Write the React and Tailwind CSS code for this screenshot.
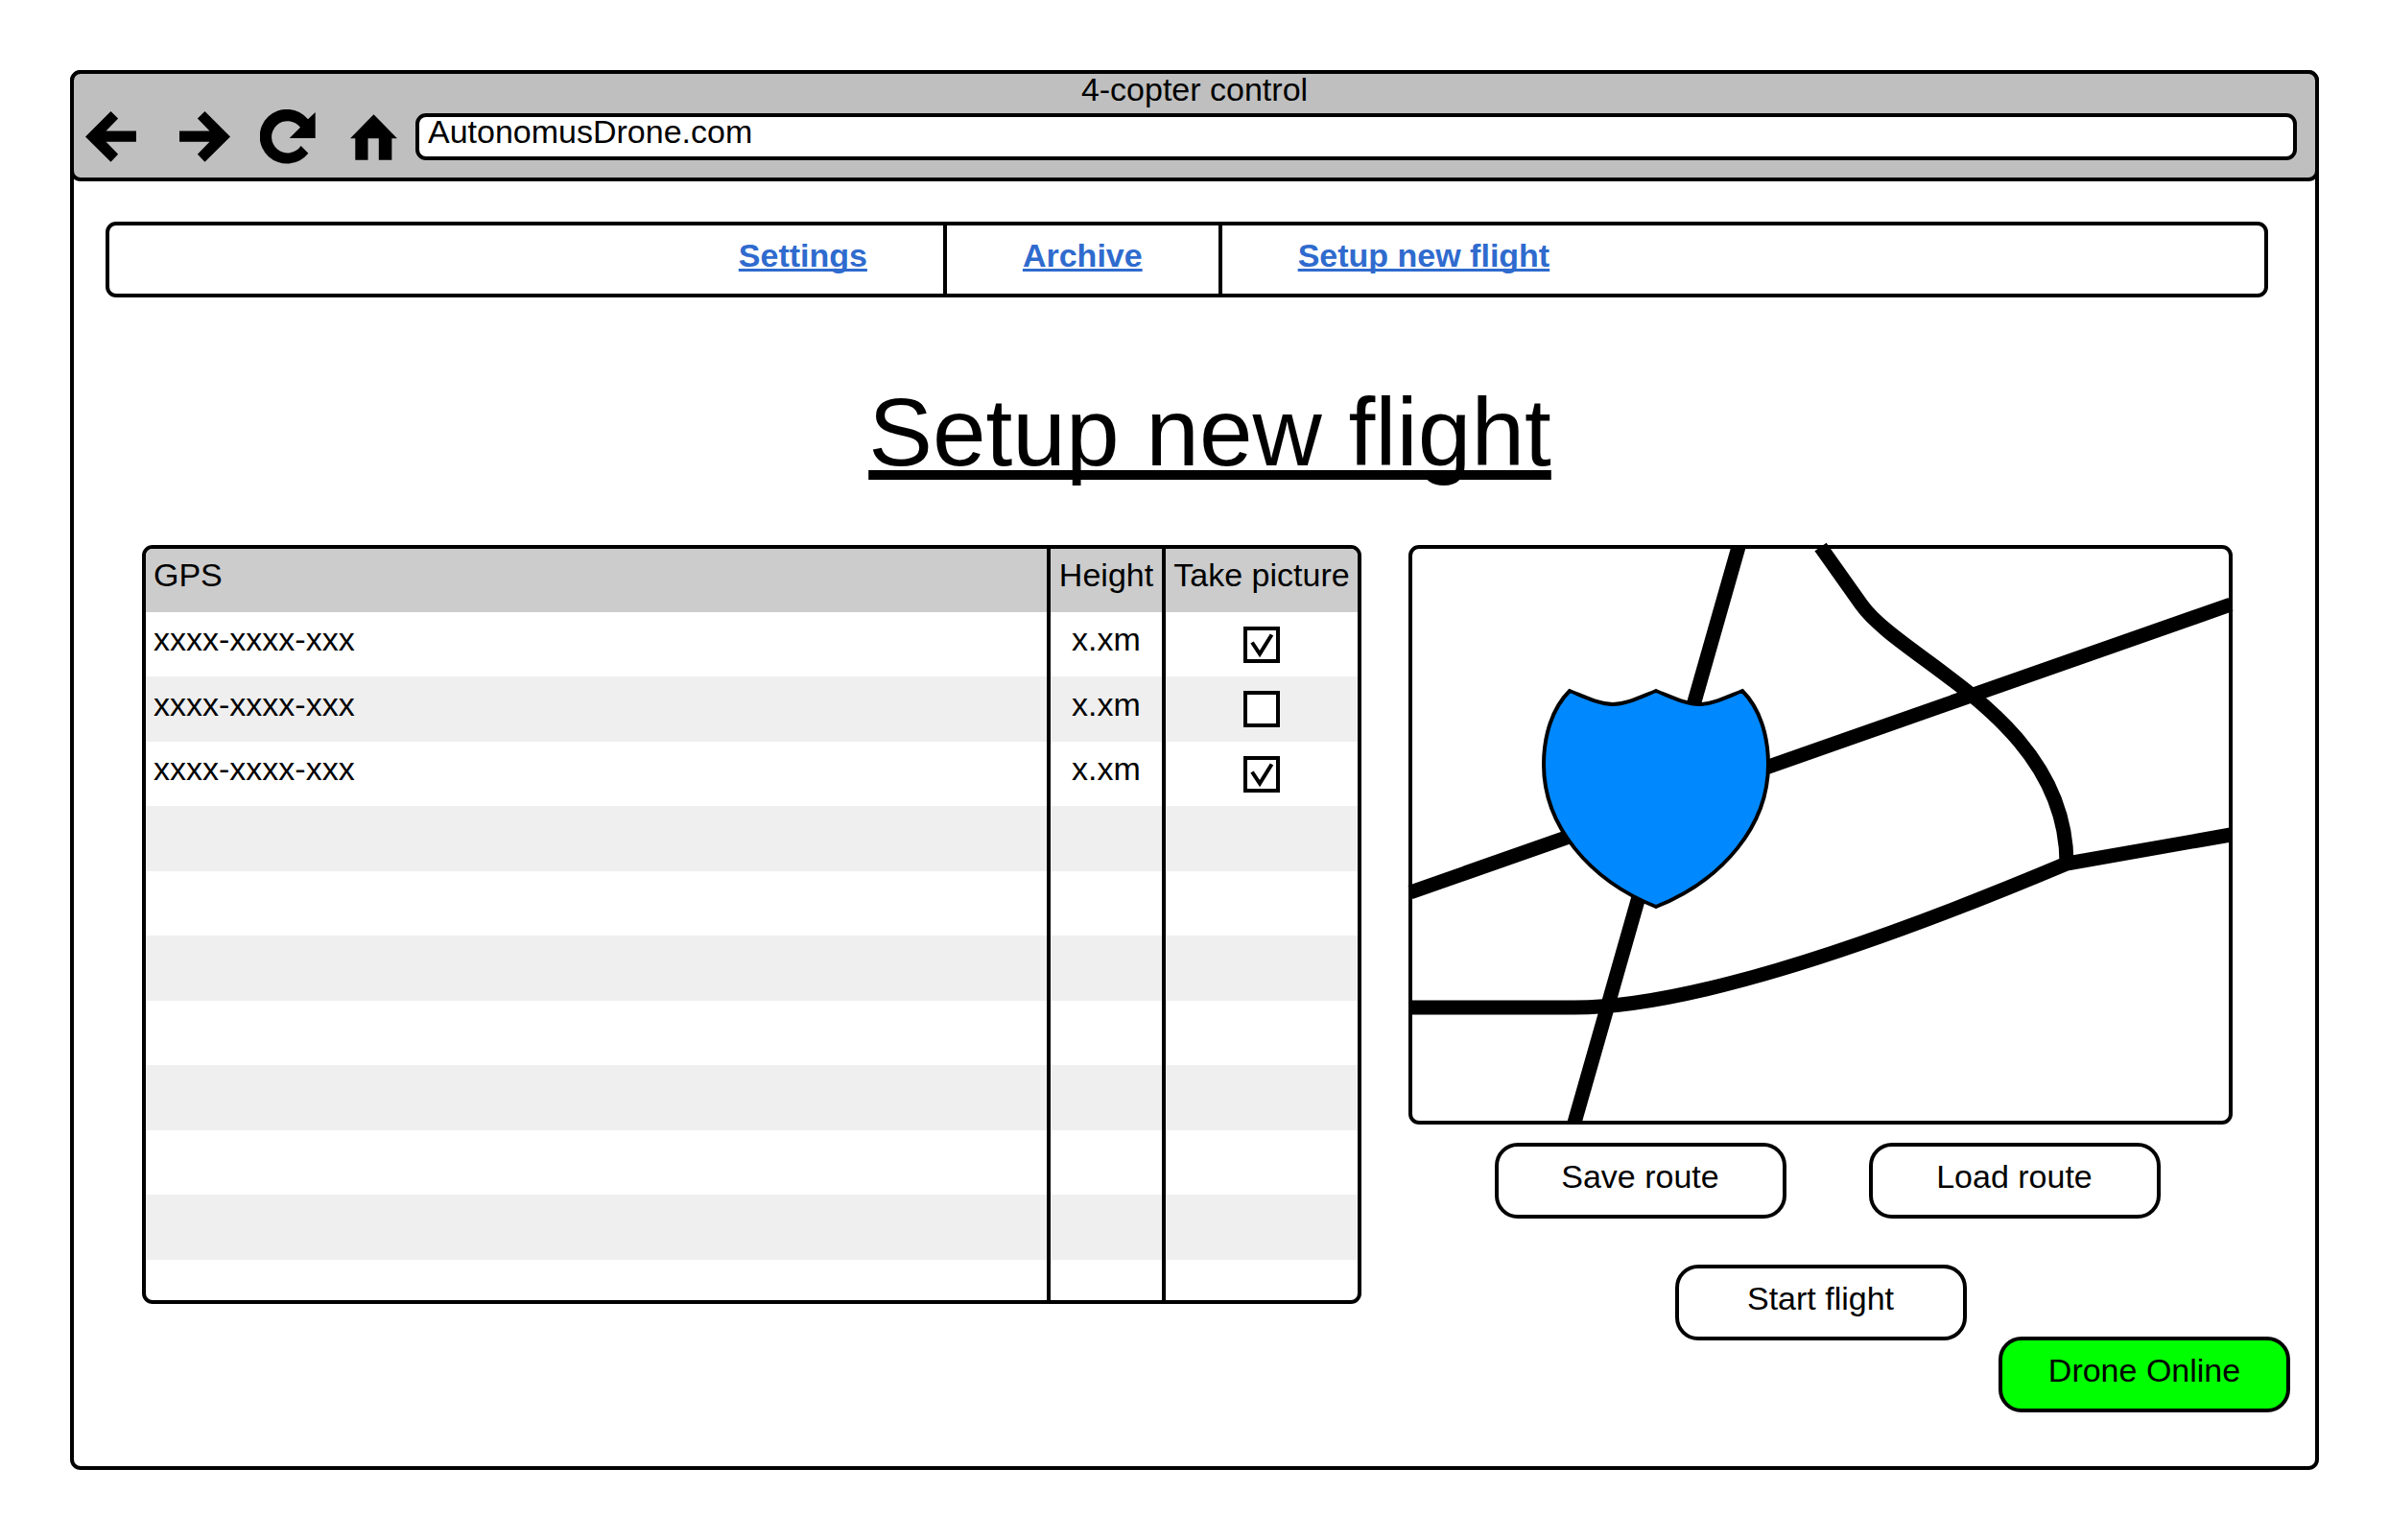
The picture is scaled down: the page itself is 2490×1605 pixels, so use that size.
import React, { useState } from "react";

const rows = [
  { gps: "xxxx-xxxx-xxx", height: "x.xm", picture: true },
  { gps: "xxxx-xxxx-xxx", height: "x.xm", picture: false },
  { gps: "xxxx-xxxx-xxx", height: "x.xm", picture: true },
];

const emptyRows = [0, 1, 2, 3, 4, 5, 6];

function BrowserBar() {
  return (
    <header className="-m-1 rounded-[11px] border-4 border-black bg-[#bfbfbf] pb-[14px]">
      <div className="text-center leading-8">4-copter control</div>
      <div className="mt-[5px] flex items-center pr-[19px] pl-3">
        <button type="button" aria-label="Back">
          <svg className="block h-[53px] w-[53px]" viewBox="27 33 160 160">
            <path d="M27 113L107 33L130 56L92 95H187V129H92L130 168L107 192Z" />
          </svg>
        </button>
        <button type="button" aria-label="Forward" className="ml-[45px]">
          <svg className="block h-[53px] w-[53px]" viewBox="320 33 160 160">
            <path d="M480 113L400 33L377 56L415 95H320V129H415L377 168L400 192Z" />
          </svg>
        </button>
        <button type="button" aria-label="Reload" className="ml-[31px]">
          <svg className="block h-[57px] w-[58px]" viewBox="574 27 174 171">
            <path d="M725 164A85 85 0 1 1 724 58L747 36V117H666L700 83A50 50 0 1 0 702 141Z" />
          </svg>
        </button>
        <button type="button" aria-label="Home" className="ml-9">
          <svg className="block h-12 w-[49px]" viewBox="855 40 148 143">
            <path d="M929 40L1003 115H986V183H945V115H911V183H871V115H855Z" />
          </svg>
        </button>
        <input
          type="text"
          aria-label="Address"
          defaultValue="AutonomusDrone.com"
          className="ml-[19px] h-[49px] min-w-0 flex-1 rounded-[11px] border-4 border-black bg-white pb-[10px] pl-[9px] leading-8 outline-none"
        />
      </div>
    </header>
  );
}

function Nav() {
  return (
    <nav className="mr-[49px] ml-[33px] flex h-[79px] justify-center rounded-[11px] border-4 border-black pr-[89px] font-bold text-[#2f6bce]">
      <a href="#settings" className="flex items-center px-[79px] pb-[10px] underline [text-decoration-skip-ink:none]">
        Settings
      </a>
      <a href="#archive" className="flex items-center border-x-4 border-black px-[79px] pb-[10px] underline [text-decoration-skip-ink:none]">
        Archive
      </a>
      <a href="#setup" className="flex items-center px-[79px] pb-[10px] underline [text-decoration-skip-ink:none]">
        Setup new flight
      </a>
    </nav>
  );
}

function PictureCheckbox({ defaultChecked, label }) {
  const [checked, setChecked] = useState(defaultChecked);
  return (
    <label className="mx-auto grid h-[38px] w-[38px]">
      <input
        type="checkbox"
        aria-label={label}
        checked={checked}
        onChange={(e) => setChecked(e.target.checked)}
        className="col-start-1 row-start-1 h-[38px] w-[38px] appearance-none border-4 border-black bg-white"
      />
      {checked && (
        <svg className="pointer-events-none z-10 col-start-1 row-start-1 h-[38px] w-[38px]" viewBox="0 0 38 38" fill="none" stroke="black" strokeWidth="4">
          <path d="M9 16.500L17 28.500L29.500 8.500" />
        </svg>
      )}
    </label>
  );
}

function RouteTable() {
  return (
    <div className="overflow-hidden rounded-[11px] border-4 border-black">
      <table className="w-full table-fixed border-separate border-spacing-0">
        <colgroup>
          <col />
          <col className="w-[120px]" />
          <col className="w-[204px]" />
        </colgroup>
        <thead className="bg-[#cccccc]">
          <tr className="h-[66px]">
            <th scope="col" className="p-0 pb-3 pl-2 text-left font-normal">GPS</th>
            <th scope="col" className="border-l-4 border-black p-0 pb-3 text-center font-normal">Height</th>
            <th scope="col" className="border-l-4 border-black p-0 pb-3 text-center font-normal">Take picture</th>
          </tr>
        </thead>
        <tbody>
          {rows.map((row, i) => (
            <tr key={i} className="h-[67px] even:h-[68px] even:bg-[#efefef]">
              <td className="p-0 pb-[11px] pl-2">{row.gps}</td>
              <td className="border-l-4 border-black p-0 pb-[11px] text-center">{row.height}</td>
              <td className="border-l-4 border-black p-0">
                <PictureCheckbox defaultChecked={row.picture} label={`Take picture at point ${i + 1}`} />
              </td>
            </tr>
          ))}
          {emptyRows.map((i) => (
            <tr key={`empty-${i}`} className="h-[68px] odd:h-[67px] even:bg-[#efefef]">
              <td className="p-0" />
              <td className="border-l-4 border-black p-0" />
              <td className="border-l-4 border-black p-0" />
            </tr>
          ))}
          <tr className="h-[42px]">
            <td className="p-0" />
            <td className="border-l-4 border-black p-0" />
            <td className="border-l-4 border-black p-0" />
          </tr>
        </tbody>
      </table>
    </div>
  );
}

function RouteMap() {
  return (
    <svg className="block h-auto w-full overflow-visible" viewBox="-2 -2 859 604" role="img" aria-label="Route map" fill="none" stroke="black">
      <rect x="0" y="0" width="855" height="600" rx="9" fill="white" strokeWidth="4" />
      <g strokeWidth="15">
        <path d="M342 0L171 600" />
        <path d="M0 360L855 60" />
        <path d="M0 480H171C300 480 513 402 684 330L855 300" />
        <path d="M427.500 0L470 60C513 120 684 180 684 330" />
      </g>
      <path
        d="M256 375C186 347 139 290 139 227C139 196 148 168 166 150C186 158 198 164 211 164C224 164 236 158 256 150C276 158 288 164 301 164C314 164 326 158 346 150C364 168 373 196 373 227C373 290 326 347 256 375Z"
        fill="#0088ff"
        strokeWidth="4"
      />
    </svg>
  );
}

function ActionButton({ children }) {
  return (
    <button type="button" className="h-[79px] w-[304px] rounded-3xl border-4 border-black bg-white pb-[10px]">
      {children}
    </button>
  );
}

export default function App() {
  return (
    <div className="flex min-h-screen flex-col bg-white p-[73px] font-['Liberation_Sans',Arial,sans-serif] text-[34px] leading-10 text-black">
      <div className="flex-1 rounded-[11px] border-4 border-black">
        <BrowserBar />
        <div className="pt-[46px]">
          <Nav />
          <h1 className="mt-20 pl-8 text-center text-[100px] leading-[120px] underline [text-decoration-skip-ink:none]">
            Setup new flight
          </h1>
          <main className="mt-[58px] flex items-start gap-[49px] pr-[86px] pl-[71px]">
            <section aria-label="Route points" className="min-w-0 flex-[1271]">
              <RouteTable />
            </section>
            <section aria-label="Route" className="min-w-0 flex-[859]">
              <RouteMap />
              <div className="mt-[19px] flex justify-center gap-[86px] pl-[14px]">
                <ActionButton>Save route</ActionButton>
                <ActionButton>Load route</ActionButton>
              </div>
              <div className="mt-12 flex justify-center">
                <ActionButton>Start flight</ActionButton>
              </div>
            </section>
          </main>
          <div className="-mt-1 flex justify-end pr-[26px] pb-14">
            <div role="status" className="flex h-[79px] w-[304px] items-center justify-center rounded-3xl border-4 border-black bg-[#00ff00] pb-[10px]">
              Drone Online
            </div>
          </div>
        </div>
      </div>
    </div>
  );
}
